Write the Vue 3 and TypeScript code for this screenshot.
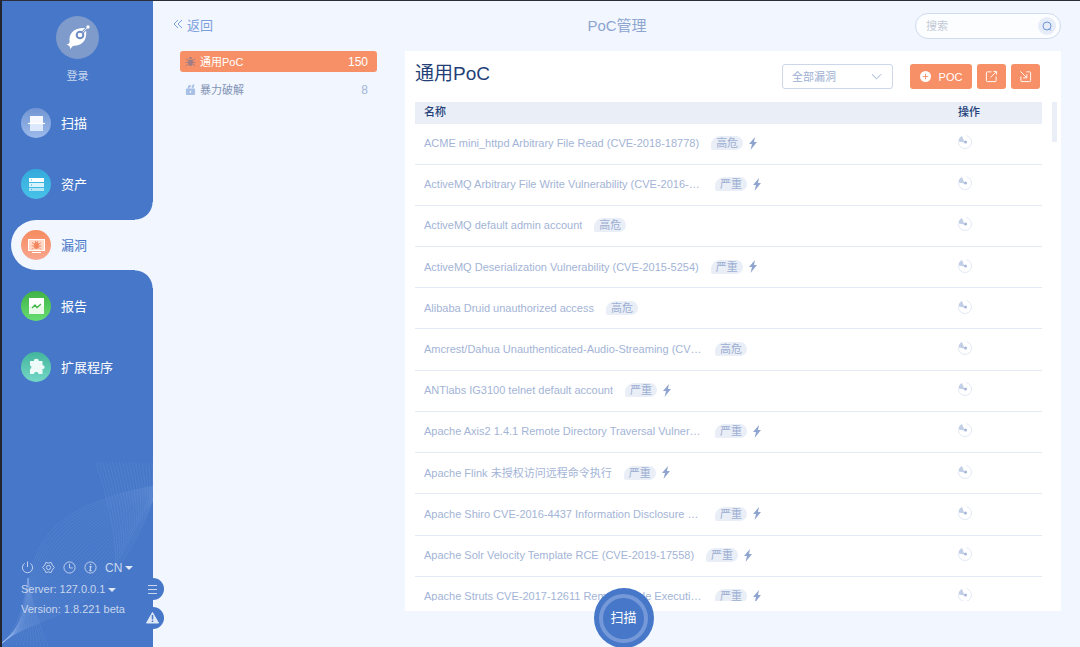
<script setup lang="ts">
import { ref } from 'vue'

interface NavItem {
  key: string
  label: string
}

interface PocRow {
  name: string
  level: string
  bolt: boolean
}

type Point = [number, number]

const navItems: NavItem[] = [
  { key: 'scan', label: '扫描' },
  { key: 'asset', label: '资产' },
  { key: 'vuln', label: '漏洞' },
  { key: 'report', label: '报告' },
  { key: 'ext', label: '扩展程序' },
]
const active = ref('vuln')
const keyword = ref('')
const filter = ref('全部漏洞')

const rows: PocRow[] = [
  { name: 'ACME mini_httpd Arbitrary File Read (CVE-2018-18778)', level: '高危', bolt: true },
  { name: 'ActiveMQ Arbitrary File Write Vulnerability (CVE-2016-3088)', level: '严重', bolt: true },
  { name: 'ActiveMQ default admin account', level: '高危', bolt: false },
  { name: 'ActiveMQ Deserialization Vulnerability (CVE-2015-5254)', level: '严重', bolt: true },
  { name: 'Alibaba Druid unauthorized access', level: '高危', bolt: false },
  { name: 'Amcrest/Dahua Unauthenticated-Audio-Streaming (CVE-2019-3948)', level: '高危', bolt: false },
  { name: 'ANTlabs IG3100 telnet default account', level: '严重', bolt: true },
  { name: 'Apache Axis2 1.4.1 Remote Directory Traversal Vulnerability', level: '严重', bolt: true },
  { name: 'Apache Flink 未授权访问远程命令执行', level: '严重', bolt: true },
  { name: 'Apache Shiro CVE-2016-4437 Information Disclosure Vulnerability', level: '严重', bolt: true },
  { name: 'Apache Solr Velocity Template RCE (CVE-2019-17558)', level: '严重', bolt: true },
  { name: 'Apache Struts CVE-2017-12611 Remote Code Execution Vulnerability', level: '严重', bolt: true },
]

// Blends two cubic curves into a family of evenly spaced strands.
function strands(from: Point[], to: Point[], count: number): string[] {
  return Array.from({ length: count }, (_, i) => {
    const t = i / (count - 1)
    const p = from.map(([x, y], k) => `${(x + (to[k][0] - x) * t).toFixed(1)} ${(y + (to[k][1] - y) * t).toFixed(1)}`)
    return `M${p[0]}C${p[1]} ${p[2]} ${p[3]}`
  })
}

const waves: string[] = [
  ...strands([[0, 193], [55, 150], [-20, 70], [151, 36]], [[0, 193], [40, 160], [105, 175], [151, 50]], 28),
  ...strands([[94, 12], [104, 44], [114, 80], [114, 116]], [[150, 12], [151, 26], [151, 38], [148, 53]], 18),
  ...strands([[0, 194], [16, 178], [22, 155], [26, 128]], [[46, 197], [38, 176], [30, 155], [26, 128]], 14),
]
</script>

<template>
  <div class="app">
    <aside class="sidebar">
      <svg class="waves" viewBox="0 0 151 197" aria-hidden="true">
        <path v-for="(d, i) in waves" :key="i" :d="d" />
      </svg>

      <button class="profile" type="button">
        <svg class="avatar" viewBox="0 0 129 129" aria-hidden="true">
          <circle cx="64.500" cy="64.500" r="64.500" fill="#7e9bcb" />
          <path d="M30 84C35 86 39 84 41 78C37 53 54 34 89 36C96 65 83 90 54 89C48 91 46 94 44 100L40 90Z" fill="#fff" />
          <path d="M80 49L96 33" stroke="#7e9bcb" stroke-width="8" />
          <circle cx="72" cy="57" r="10" fill="#fff" stroke="#6c8cc3" stroke-width="6" />
          <path d="M80 49L96 33" stroke="#dfe7f4" stroke-width="3" />
          <circle cx="96" cy="33" r="5" fill="#fff" />
        </svg>
        <span>登录</span>
      </button>

      <nav class="nav">
        <button
          v-for="item in navItems"
          :key="item.key"
          type="button"
          class="nav-item"
          :class="{ active: item.key === active }"
          @click="active = item.key"
        >
          <span class="nav-icon" :class="item.key">
            <svg v-if="item.key === 'scan'" viewBox="0 0 30 30">
              <rect x="9" y="8" width="13" height="15" fill="#dce9fc" />
              <rect x="9" y="8" width="13" height="7" fill="#f5f9ff" />
              <path d="M7 15.500H24" stroke="#fff" stroke-width="1.200" />
            </svg>
            <svg v-else-if="item.key === 'asset'" viewBox="0 0 30 30">
              <rect x="8" y="9" width="15" height="4" fill="#fff" />
              <rect x="8" y="14" width="15" height="4" fill="#d9f3fc" />
              <rect x="8" y="19" width="15" height="3" fill="#b5e6f6" />
              <path d="M10 11H11M10 16H11M10 20.500H11" stroke="#36aede" stroke-width="1.200" />
            </svg>
            <svg v-else-if="item.key === 'vuln'" viewBox="0 0 30 30">
              <rect x="7.500" y="9.500" width="16" height="11" fill="#ffd9ca" stroke="#fff" />
              <path d="M11 22.500H20" stroke="#fff" />
              <ellipse cx="15.500" cy="15.500" rx="2.600" ry="3.600" fill="#f5875f" />
              <path d="M11 12.500L13 14M20 12.500L18 14M10.500 16H20.500M11 19.500L13 17.500M20 19.500L18 17.500M14 11L15 12.500M17 11L16 12.500" stroke="#f5875f" />
            </svg>
            <svg v-else-if="item.key === 'report'" viewBox="0 0 30 30">
              <rect x="8" y="7" width="15" height="16" fill="#eaf9ea" />
              <rect x="8" y="7" width="15" height="8" fill="#fff" />
              <path d="M11 17L14 14L16 16.500L20 13" fill="none" stroke="#43b749" stroke-width="1.300" />
            </svg>
            <svg v-else viewBox="0 0 30 30">
              <path d="M9 9H13C12.500 7.500 13.800 6.800 15.300 6.800S18.100 7.500 17.600 9H21.500V13.500C22.500 13 23.500 13.800 23.500 15.200S22.500 17.300 21.500 16.800V22H17.500C17.500 20.500 16.700 20 15.300 20S13 20.500 13 22H9V17C10.800 17 10.800 13.500 9 13.500Z" fill="#eefbf8" />
            </svg>
          </span>
          <span class="nav-label">{{ item.label }}</span>
        </button>
      </nav>

      <footer class="status">
        <div class="tools">
          <button type="button" aria-label="power">
            <svg viewBox="0 0 14 14"><path d="M4 2.500A5.500 5.500 0 1 0 10 2.500M7 0.500V6.500" /></svg>
          </button>
          <button type="button" aria-label="settings">
            <svg viewBox="0 0 14 14">
              <path d="M4.200 1.500L7 2.300L9.800 1.500L11 4.300L13.300 7L11 9.700L9.800 12.500L7 11.700L4.200 12.500L3 9.700L0.700 7L3 4.300Z" />
              <circle cx="7" cy="7" r="2.300" />
            </svg>
          </button>
          <button type="button" aria-label="history">
            <svg viewBox="0 0 14 14"><circle cx="7" cy="7" r="6" /><path d="M7 3V7.500H10.500" /></svg>
          </button>
          <button type="button" aria-label="about">
            <svg viewBox="0 0 14 14">
              <circle cx="7" cy="7" r="6" />
              <path d="M5.800 6H7.400L6.400 10.300H8.200M7.300 3.200L7.100 4.400" stroke-width="1.300" />
            </svg>
          </button>
          <button type="button" class="lang">CN<i class="caret"></i></button>
        </div>
        <button type="button" class="server">Server: 127.0.0.1<i class="caret"></i></button>
        <div class="version">Version: 1.8.221 beta</div>
      </footer>

      <div class="side-tabs">
        <button type="button" aria-label="menu">
          <svg viewBox="0 0 22 22"><path d="M6 7.500H15M6 11.500H15M6 15.500H15" stroke="#c9d7ef" /></svg>
        </button>
        <button type="button" aria-label="warnings">
          <svg viewBox="0 0 22 22">
            <path d="M10.500 5.500L16.500 16H4.500Z" fill="#dfe8f7" stroke="#dfe8f7" stroke-linejoin="round" />
            <path d="M10.500 8V12.500M10.500 13.500V15" stroke="#4677c8" stroke-width="1.500" />
          </svg>
        </button>
      </div>
    </aside>

    <main class="main">
      <header class="topbar">
        <a class="back" href="#">
          <svg viewBox="0 0 10 10" aria-hidden="true"><path d="M5 1L1 5L5 9M9 1L5 5L9 9" /></svg>返回
        </a>
        <h1>PoC管理</h1>
        <div class="search">
          <input v-model="keyword" type="text" placeholder="搜索" aria-label="搜索" />
          <button type="button" aria-label="搜索">
            <svg viewBox="0 0 18 18"><circle cx="9" cy="9" r="4" /><path d="M11 11.500L13 13.500" /></svg>
          </button>
        </div>
      </header>

      <div class="content">
        <div class="groups">
          <button type="button" class="group selected">
            <svg viewBox="0 0 12 12" aria-hidden="true">
              <path d="M3.500 4H8.500V8.500Q8.500 11 6 11T3.500 8.500ZM4 3Q4 1 6 1T8 3Z" fill="#a07d86" />
              <path d="M1 3L3.500 5M11 3L8.500 5M0.500 7H11.500M1 11L3.500 8.500M11 11L8.500 8.500" stroke="#a07d86" />
            </svg>
            <span class="group-name">通用PoC</span><span class="group-count">150</span>
          </button>
          <button type="button" class="group">
            <svg viewBox="0 0 12 12" aria-hidden="true">
              <rect x="1" y="5" width="10" height="7" rx="1" fill="#a9c0e6" />
              <path d="M4 5V3.500Q4 1.500 6.500 2.500M8 4.500L9.500 0.500" fill="none" stroke="#a9c0e6" stroke-width="2" />
              <path d="M6 7.500V9.500" stroke="#f1f6ff" stroke-width="1.500" />
            </svg>
            <span class="group-name">暴力破解</span><span class="group-count">8</span>
          </button>
        </div>

        <section class="panel">
          <div class="panel-head">
            <h2>通用PoC</h2>
            <div class="select">
              <select v-model="filter" aria-label="漏洞筛选">
                <option>全部漏洞</option>
              </select>
              <svg viewBox="0 0 12 8" aria-hidden="true"><path d="M1 1L6 6L11 1" /></svg>
            </div>
            <div class="actions">
              <button type="button" class="add">
                <svg viewBox="0 0 12 12" aria-hidden="true">
                  <circle cx="6" cy="6" r="6" fill="#fff" /><path d="M6 3V9M3 6H9" stroke="#f79067" />
                </svg>POC
              </button>
              <button type="button" aria-label="导出">
                <svg viewBox="0 0 14 14"><path d="M7 2H2.500Q1.500 2 1.500 3V11.500Q1.500 12.500 2.500 12.500H11Q12 12.500 12 11.500V7M6 8L12 2M9 1.500H12.500V5" /></svg>
              </button>
              <button type="button" aria-label="导入">
                <svg viewBox="0 0 14 14"><path d="M8 2H11.500Q12.500 2 12.500 3V11.500Q12.500 12.500 11.500 12.500H3Q2 12.500 2 11.500V7M1.500 1.500L8 8M8.500 4.500V8.500H4.500" /></svg>
              </button>
            </div>
          </div>

          <div class="table-area">
            <div class="table-wrap">
              <table>
                <thead>
                  <tr><th scope="col">名称</th><th scope="col" class="op">操作</th></tr>
                </thead>
                <tbody>
                  <tr v-for="row in rows" :key="row.name">
                    <td>
                      <div class="name-cell">
                        <span class="name">{{ row.name }}</span>
                        <span class="tag">{{ row.level }}</span>
                        <svg v-if="row.bolt" class="bolt" viewBox="0 0 8 13" aria-hidden="true">
                          <path d="M6 0L0 7H3L1.500 13L8 5H5Z" />
                        </svg>
                      </div>
                    </td>
                    <td class="op">
                      <svg class="spinner" viewBox="0 0 14 14" aria-hidden="true">
                        <path d="M8.500 0.700A6.500 6.500 0 1 1 0.500 7" fill="none" stroke="#e1e8f4" />
                        <path d="M6.500 7.500L0.500 6.500Q0.500 2.500 4 1Z" fill="#c3cfe6" />
                        <circle cx="7.500" cy="7" r="1.500" fill="#a5b7d9" />
                      </svg>
                    </td>
                  </tr>
                </tbody>
              </table>
            </div>
            <div class="scroll-thumb"></div>
          </div>
        </section>
      </div>

      <button type="button" class="scan-button"><span>扫描</span></button>
    </main>
  </div>
</template>

<style>
html,
body {
  margin: 0;
  background: #f1f6ff;
}
</style>

<style scoped>
.app {
  box-sizing: border-box;
  display: flex;
  height: 100vh;
  border-top: 1px solid #2b2d3a;
  border-left: 2px solid #23252e;
  background: #f1f6ff;
  color: #a3b4d6;
  font-family: 'Liberation Sans', 'Noto Sans CJK SC', sans-serif;
  font-size: 11px;
  overflow: hidden;
}
button {
  padding: 0;
  border: 0;
  background: none;
  color: inherit;
  font: inherit;
  cursor: pointer;
}
svg {
  display: block;
}
.sidebar {
  position: relative;
  display: flex;
  flex-direction: column;
  flex: 0 0 151px;
  background: #4677c8;
}
.waves {
  position: absolute;
  left: 0;
  bottom: 0;
  width: 100%;
}
.waves path {
  fill: none;
  stroke: #a8c4f2;
  stroke-opacity: 0.18;
  stroke-width: 0.6;
}
.profile {
  display: flex;
  flex-direction: column;
  align-items: center;
  gap: 9px;
  margin: 15px 0 13px;
  color: #c8d6ee;
  line-height: 17px;
}
.avatar {
  width: 43px;
  height: 43px;
}
.nav {
  display: flex;
  flex-direction: column;
  gap: 11px;
  padding-left: 9px;
}
.nav-item {
  position: relative;
  display: flex;
  align-items: center;
  gap: 10px;
  height: 50px;
  padding-left: 10px;
  border-radius: 25px 0 0 25px;
  color: #fff;
  font-size: 13px;
}
.nav-label {
  padding-bottom: 2px;
}
.nav-item.active {
  background: #f1f6ff;
  color: #4677c8;
}
.nav-item.active::before,
.nav-item.active::after {
  content: '';
  position: absolute;
  right: 0;
  width: 18px;
  height: 18px;
}
.nav-item.active::before {
  bottom: 100%;
  background: radial-gradient(circle at 0 0, #4677c8 17px, #f1f6ff 18px);
}
.nav-item.active::after {
  top: 100%;
  background: radial-gradient(circle at 0 100%, #4677c8 17px, #f1f6ff 18px);
}
.nav-icon {
  width: 30px;
  height: 30px;
  border-radius: 50%;
}
.nav-icon.scan {
  background: linear-gradient(#7195d3, #9cbaea);
}
.nav-icon.asset {
  background: linear-gradient(#35a9dc, #48c3e8);
}
.nav-icon.vuln {
  background: linear-gradient(#f68b60, #f8a68e);
}
.nav-icon.report {
  background: linear-gradient(#3fb247, #66dd72);
}
.nav-icon.ext {
  background: linear-gradient(#43b59c, #74d8c6);
}
.status {
  position: relative;
  display: flex;
  flex-direction: column;
  align-items: flex-start;
  margin-top: auto;
  padding: 0 0 28px 19px;
  color: #c8d6ee;
  line-height: 20px;
}
.tools {
  display: flex;
  align-items: center;
  gap: 8px;
  height: 23px;
}
.tools svg {
  width: 13px;
  height: 13px;
  fill: none;
  stroke: #c8d6ee;
}
.lang {
  font-size: 12px;
}
.caret {
  display: inline-block;
  margin-left: 3px;
  border: 4px solid transparent;
  border-top-color: #dfe8f7;
  border-bottom: 0;
  vertical-align: middle;
}
.side-tabs {
  position: absolute;
  right: -11px;
  bottom: 18px;
  z-index: 2;
  display: flex;
  flex-direction: column;
  gap: 7px;
}
.side-tabs button {
  width: 22px;
  height: 22px;
  border-radius: 50%;
  background: #4677c8;
}
.main {
  position: relative;
  display: flex;
  flex-direction: column;
  flex: 1;
  min-width: 0;
}
.topbar {
  display: grid;
  grid-template-columns: 1fr auto 1fr;
  align-items: center;
  height: 50px;
  padding: 0 19px 0 20px;
}
.back {
  display: flex;
  align-items: center;
  gap: 4px;
  padding-bottom: 4px;
  color: #7d9fdc;
  font-size: 13px;
  text-decoration: none;
}
.back svg {
  width: 10px;
  height: 10px;
  fill: none;
  stroke: #7d9fdc;
}
h1 {
  margin: 0;
  padding-bottom: 4px;
  color: #8ea5d0;
  font-size: 15px;
  font-weight: 400;
}
.search {
  box-sizing: border-box;
  display: flex;
  align-items: center;
  justify-self: end;
  width: 146px;
  height: 26px;
  padding: 0 4px 0 10px;
  border: 1px solid #d0dbee;
  border-radius: 13px;
  background: #fcfdff;
}
.search input {
  flex: 1;
  min-width: 0;
  padding: 0;
  border: 0;
  outline: 0;
  background: none;
  color: #7d9fdc;
  font: inherit;
}
.search input::placeholder {
  color: #c3c9d4;
}
.search button {
  width: 18px;
  height: 18px;
  border-radius: 50%;
  background: #e6edf8;
}
.search svg {
  fill: none;
  stroke: #6f95d8;
}
.content {
  display: flex;
  flex: 1;
  min-height: 0;
  padding: 0 19px 36px 27px;
}
.groups {
  display: flex;
  flex-direction: column;
  flex: 0 0 197px;
  gap: 7px;
  margin-right: 28px;
}
.group {
  display: flex;
  align-items: center;
  gap: 4px;
  height: 21px;
  padding: 0 9px 0 5px;
  border-radius: 3px;
}
.group svg {
  width: 11px;
  height: 11px;
}
.group-name {
  flex: 1;
  padding-bottom: 2px;
  color: #8494b5;
  text-align: left;
}
.group-count {
  font-size: 12px;
}
.group.selected,
.group.selected .group-name {
  color: #fff;
}
.group.selected {
  background: #f79067;
}
.panel {
  display: flex;
  flex-direction: column;
  flex: 1;
  min-width: 0;
  padding: 0 4px 10px 10px;
  background: #fff;
}
.panel-head {
  display: flex;
  align-items: center;
  height: 51px;
  padding-right: 17px;
}
h2 {
  flex: 1;
  margin: 0;
  color: #243f78;
  font-size: 19px;
  font-weight: 400;
  line-height: 46px;
  align-self: flex-start;
}
.select {
  position: relative;
  margin-right: 17px;
}
.select select {
  display: block;
  width: 111px;
  height: 25px;
  padding: 0 9px;
  border: 1px solid #ccd7ea;
  border-radius: 3px;
  appearance: none;
  background: #fff;
  color: #9dafd2;
  font: inherit;
}
.select svg {
  position: absolute;
  top: 9px;
  right: 11px;
  width: 11px;
  height: 8px;
  fill: none;
  stroke: #8fa5cf;
  pointer-events: none;
}
.actions {
  display: flex;
  gap: 5px;
}
.actions button {
  display: flex;
  align-items: center;
  justify-content: center;
  width: 29px;
  height: 25px;
  border-radius: 3px;
  background: #f79067;
  color: #fff;
}
.actions .add {
  gap: 8px;
  width: 62px;
}
.actions svg {
  width: 13px;
  height: 13px;
  fill: none;
  stroke: #fff;
}
.actions .add svg {
  width: 11px;
  height: 11px;
  stroke: none;
}
.table-area {
  display: flex;
  flex: 1;
  gap: 10px;
  min-height: 0;
}
.table-wrap {
  flex: 1;
  min-width: 0;
  overflow: hidden;
}
table {
  width: 100%;
  height: 516px;
  border-collapse: collapse;
  table-layout: fixed;
}
thead tr {
  height: 22px;
  background: #e9eef7;
}
th {
  padding: 0 9px 2px;
  color: #243f78;
  font-weight: 500;
  line-height: 16px;
  text-align: left;
}
td {
  padding: 0 9px 1px;
  border-bottom: 1px solid #e3e9f5;
}
.op {
  width: 75px;
}
td.op {
  padding-bottom: 3px;
}
.name-cell {
  display: flex;
  align-items: center;
  line-height: 16px;
}
.name {
  max-width: 279px;
  margin-right: 12px;
  overflow: hidden;
  text-overflow: ellipsis;
  white-space: nowrap;
}
.tag {
  width: 32px;
  margin-right: 6px;
  border-radius: 9px 7px 7px 2px;
  background: #e9eef7;
  color: #9dafd2;
  line-height: 14px;
  text-align: center;
}
.bolt {
  width: 8px;
  height: 13px;
  fill: #8fa5cf;
}
.spinner {
  width: 14px;
  height: 14px;
}
.scroll-thumb {
  width: 5px;
  height: 40px;
  background: #e9eef7;
}
.scan-button {
  position: absolute;
  bottom: -1px;
  left: calc(50% - 23px);
  display: flex;
  align-items: center;
  justify-content: center;
  width: 60px;
  height: 60px;
  border-radius: 50%;
  background: #4677c8;
  color: #fff;
  font-size: 13px;
}
.scan-button span {
  box-sizing: border-box;
  width: 49px;
  height: 49px;
  border: 4px solid #7599d8;
  border-radius: 50%;
  line-height: 40px;
}
</style>
